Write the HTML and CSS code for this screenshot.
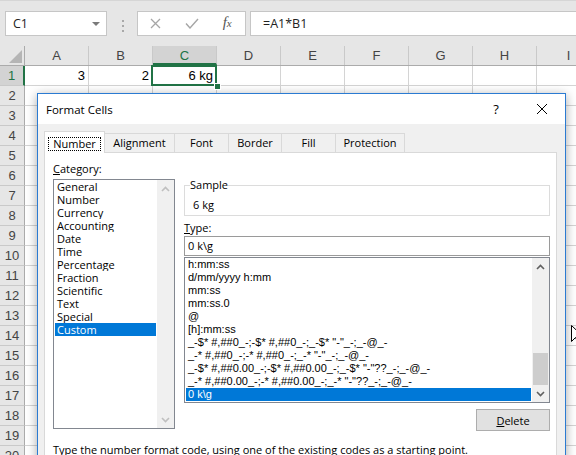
FILE: index.html
```html
<!DOCTYPE html>
<html lang="en">
<head>
    <meta charset="UTF-8">
    <title>Format Cells</title>
    <link rel="stylesheet" href="styles.css">
</head>
<body>
    <div class="formula-bar">
        <div class="name-box">
            <span>C1</span>
            <svg class="caret" width="8" height="4" viewBox="0 0 8 4"><path d="M0 0h8L4 4z" fill="#7a7a7a"/></svg>
        </div>
        <div class="grip"><i></i><i></i><i></i></div>
        <div class="fx-buttons">
            <span class="fx-slot">
                <svg width="11" height="11" viewBox="0 0 11 11"><path d="M1 1l9 9M10 1l-9 9" stroke="#a6a6a6" stroke-width="1.3" fill="none"/></svg>
            </span>
            <span class="fx-slot">
                <svg width="14" height="11" viewBox="0 0 14 11"><path d="M1 5.5l4 4.5L13 1" stroke="#a6a6a6" stroke-width="1.4" fill="none"/></svg>
            </span>
            <span class="fx-slot fx">f<small>x</small></span>
        </div>
        <div class="formula-input">=A1*B1</div>
    </div>

    <div class="col-heads">
        <div class="corner">
            <svg width="13" height="13" viewBox="0 0 13 13"><path d="M13 0v13H0z" fill="#b5b5b5"/></svg>
        </div>
        <div class="col-head">A</div>
        <div class="col-head">B</div>
        <div class="col-head active">C</div>
        <div class="col-head">D</div>
        <div class="col-head">E</div>
        <div class="col-head">F</div>
        <div class="col-head">G</div>
        <div class="col-head">H</div>
        <div class="col-head">I</div>
    </div>

    <div class="row">
        <div class="row-head active">1</div>
        <div class="cell">3</div>
        <div class="cell">2</div>
        <div class="cell selected">6 kg<span class="fill-handle"></span></div>
        <div class="cell"></div>
        <div class="cell"></div>
        <div class="cell"></div>
        <div class="cell"></div>
        <div class="cell"></div>
        <div class="cell"></div>
    </div>

    <div class="sheet-body">
        <div class="row-heads">
            <div class="row-head">2</div>
            <div class="row-head">3</div>
            <div class="row-head">4</div>
            <div class="row-head">5</div>
            <div class="row-head">6</div>
            <div class="row-head">7</div>
            <div class="row-head">8</div>
            <div class="row-head">9</div>
            <div class="row-head">10</div>
            <div class="row-head">11</div>
            <div class="row-head">12</div>
            <div class="row-head">13</div>
            <div class="row-head">14</div>
            <div class="row-head">15</div>
            <div class="row-head">16</div>
            <div class="row-head">17</div>
            <div class="row-head">18</div>
            <div class="row-head">19</div>
            <div class="row-head">20</div>
        </div>
        <div class="grid"></div>
    </div>

    <div class="dialog">
        <div class="titlebar">
            <span class="title">Format Cells</span>
            <span class="title-btn help">?</span>
            <span class="title-btn">
                <svg width="10" height="10" viewBox="0 0 10 10"><path d="M0 0l10 10M10 0L0 10" stroke="#000" stroke-width="1" fill="none"/></svg>
            </span>
        </div>

        <div class="tabs">
            <div class="tab active"><span class="focus">Number</span></div>
            <div class="tab tab-alignment">Alignment</div>
            <div class="tab tab-font">Font</div>
            <div class="tab tab-border">Border</div>
            <div class="tab tab-fill">Fill</div>
            <div class="tab tab-protection">Protection</div>
        </div>

        <div class="panel">
            <div class="panel-cols">
                <div class="category">
                    <div class="label"><u>C</u>ategory:</div>
                    <div class="listbox cat-list">
                        <ul class="items">
                            <li>General</li>
                            <li>Number</li>
                            <li>Currency</li>
                            <li>Accounting</li>
                            <li>Date</li>
                            <li>Time</li>
                            <li>Percentage</li>
                            <li>Fraction</li>
                            <li>Scientific</li>
                            <li>Text</li>
                            <li>Special</li>
                            <li class="selected">Custom</li>
                        </ul>
                        <div class="vscroll disabled">
                            <span class="arrow"><svg width="9" height="6" viewBox="0 0 9 6"><path d="M1 5l3.5-3.5L8 5" stroke="currentColor" stroke-width="1.6" fill="none"/></svg></span>
                            <span class="track"></span>
                            <span class="arrow"><svg width="9" height="6" viewBox="0 0 9 6"><path d="M1 1l3.5 3.5L8 1" stroke="currentColor" stroke-width="1.6" fill="none"/></svg></span>
                        </div>
                    </div>
                </div>

                <div class="format">
                    <fieldset class="sample">
                        <legend>Sample</legend>
                        <div class="sample-text">6 kg</div>
                    </fieldset>
                    <div class="label type-label"><u>T</u>ype:</div>
                    <div class="type-input">0 k\g</div>
                    <div class="listbox fmt-list">
                        <ul class="items">
                            <li>h:mm:ss</li>
                            <li>d/mm/yyyy h:mm</li>
                            <li>mm:ss</li>
                            <li>mm:ss.0</li>
                            <li>@</li>
                            <li>[h]:mm:ss</li>
                            <li>_-$* #,##0_-;-$* #,##0_-;_-$* "-"_-;_-@_-</li>
                            <li>_-* #,##0_-;-* #,##0_-;_-* "-"_-;_-@_-</li>
                            <li>_-$* #,##0.00_-;-$* #,##0.00_-;_-$* "-"??_-;_-@_-</li>
                            <li>_-* #,##0.00_-;-* #,##0.00_-;_-* "-"??_-;_-@_-</li>
                            <li class="selected">0 k\g</li>
                        </ul>
                        <div class="vscroll">
                            <span class="arrow"><svg width="9" height="6" viewBox="0 0 9 6"><path d="M1 5l3.5-3.5L8 5" stroke="currentColor" stroke-width="1.6" fill="none"/></svg></span>
                            <span class="track"><span class="thumb"></span></span>
                            <span class="arrow"><svg width="9" height="6" viewBox="0 0 9 6"><path d="M1 1l3.5 3.5L8 1" stroke="currentColor" stroke-width="1.6" fill="none"/></svg></span>
                        </div>
                    </div>
                    <div class="actions">
                        <button class="btn"><u>D</u>elete</button>
                    </div>
                </div>
            </div>
            <p class="hint">Type the number format code, using one of the existing codes as a starting point.</p>
        </div>
    </div>

    <svg class="cursor" width="12" height="20" viewBox="0 0 12 20">
        <path d="M0.5 0.5v16l4-4 3 6.5 2.2-1-3-6.3h5.6z" fill="#fff" stroke="#000" stroke-width="1"/>
    </svg>
</body>
</html>
```

FILE: styles.css
```css
* {
    margin: 0;
    padding: 0;
    box-sizing: border-box;
}

body {
    position: relative;
    width: 576px;
    height: 455px;
    overflow: hidden;
    background: #fff;
    font-family: "Open Sans", sans-serif;
    color: #000;
}

/* ---------- formula bar ---------- */

.formula-bar {
    display: flex;
    align-items: flex-start;
    height: 46px;
    padding: 11px 0 0 5px;
    background: #e6e6e6;
    border-top: 1px solid #d6d6d6;
}

.name-box {
    display: flex;
    align-items: center;
    justify-content: space-between;
    width: 102px;
    height: 25px;
    margin-top: -1px;
    padding: 0 6px 0 7px;
    background: #fff;
    border: 1px solid #c6c6c6;
    font-size: 12.5px;
    color: #222;
}

.grip {
    display: flex;
    flex-direction: column;
    gap: 3px;
    margin: 8px 0 0 15px;
}

.grip i {
    display: block;
    width: 2px;
    height: 2px;
    background: #a8a8a8;
}

.fx-buttons {
    display: flex;
    width: 109px;
    height: 25px;
    margin: -1px 0 0 13px;
    background: #fff;
    border: 1px solid #c6c6c6;
}

.fx-slot {
    flex: 1;
    display: flex;
    align-items: center;
    justify-content: center;
}

.fx {
    font-family: "Liberation Serif", serif;
    font-style: italic;
    font-size: 15px;
    color: #555;
    padding-bottom: 2px;
}

.fx small {
    font-size: 11px;
}

.formula-input {
    flex: 1;
    height: 25px;
    margin: -1px 0 0 4px;
    padding-left: 12px;
    background: #fff;
    border: 1px solid #c6c6c6;
    border-right: 0;
    font-size: 12.5px;
    line-height: 23px;
    color: #222;
}

/* ---------- sheet ---------- */

.col-heads,
.row {
    display: flex;
    height: 20px;
    font-family: "Liberation Sans", sans-serif;
    font-size: 13px;
    color: #444;
}

.col-heads {
    background: #e6e6e6;
    border-bottom: 1px solid #ababab;
}

.corner {
    display: flex;
    align-items: flex-end;
    justify-content: flex-end;
    flex: 0 0 25px;
    padding: 0 2px 2px 0;
    border-right: 1px solid #ababab;
}

.col-head {
    flex: 0 0 64px;
    border-right: 1px solid #c9c9c9;
    text-align: center;
    line-height: 19px;
}

.col-head.active {
    background: #d3d3d3;
    color: #217346;
    border-bottom: 2px solid #217346;
}

.row-head {
    flex: none;
    width: 25px;
    height: 20px;
    background: #e6e6e6;
    border-right: 1px solid #ababab;
    border-bottom: 1px solid #c9c9c9;
    text-align: center;
    line-height: 19px;
    font-family: "Liberation Sans", sans-serif;
    font-size: 13px;
    color: #444;
}

.row-head.active {
    background: #d3d3d3;
    color: #217346;
    border-right: 2px solid #217346;
}

.cell {
    position: relative;
    flex: 0 0 64px;
    padding-right: 3px;
    border-right: 1px solid #d4d4d4;
    border-bottom: 1px solid #d4d4d4;
    text-align: right;
    line-height: 20px;
    color: #000;
}

.cell.selected::after {
    content: "";
    position: absolute;
    top: -1px;
    left: -2px;
    right: -1px;
    bottom: -1px;
    border: 2px solid #217346;
}

.fill-handle {
    position: absolute;
    right: -5px;
    bottom: -5px;
    z-index: 1;
    width: 7px;
    height: 7px;
    background: #217346;
    border: 1px solid #fff;
}

.sheet-body {
    display: flex;
}

.grid {
    flex: 1;
    height: 380px;
    background-image:
        linear-gradient(to right, transparent 63px, #d4d4d4 63px),
        linear-gradient(to bottom, transparent 19px, #d4d4d4 19px);
    background-size: 64px 20px;
}

/* ---------- dialog ---------- */

.dialog {
    position: absolute;
    left: 37px;
    top: 93px;
    width: 529px;
    height: 390px;
    background: #f0f0f0;
    border: 1px solid #2b7bd2;
    box-shadow: 0 2px 10px rgba(0, 0, 0, 0.35);
    font-size: 11px;
}

.titlebar {
    display: flex;
    align-items: center;
    height: 30px;
    background: #fff;
}

.title {
    flex: 1;
    padding-left: 8px;
    font-size: 11.5px;
}

.title-btn {
    display: flex;
    align-items: center;
    justify-content: center;
    width: 46px;
    height: 30px;
}

.help {
    font-size: 13px;
}

.tabs {
    display: flex;
    align-items: flex-end;
    margin: 7px 0 0 6px;
}

.tab {
    height: 19px;
    margin-left: -1px;
    border: 1px solid #d9d9d9;
    border-bottom: 0;
    text-align: center;
    line-height: 18px;
}

.tab.active {
    position: relative;
    z-index: 1;
    width: 61px;
    height: 22px;
    margin: 0 0 -1px;
    padding: 5px 3px 0;
    background: #fff;
}

.focus {
    display: block;
    height: 14px;
    border: 1px dotted #000;
    line-height: 12px;
}

.tab-alignment { width: 71px; }
.tab-font { width: 55px; }
.tab-border { width: 54px; }
.tab-fill { width: 55px; }
.tab-protection { width: 70px; }

.panel {
    width: 513px;
    height: 320px;
    margin-left: 6px;
    padding: 8px 6px 0 8px;
    background: #fff;
    border: 1px solid #d9d9d9;
}

.panel-cols {
    display: flex;
    gap: 9px;
}

.category {
    width: 122px;
}

.label {
    height: 16px;
    line-height: 16px;
}

.category .label {
    margin-bottom: 2px;
}

.listbox {
    display: flex;
    background: #fff;
    border: 1px solid #828790;
}

.cat-list {
    height: 250px;
}

.items {
    flex: 1;
    min-width: 0;
    padding: 0 1px;
    list-style: none;
}

.items li {
    height: 13px;
    padding-left: 2px;
    line-height: 13px;
    white-space: nowrap;
    overflow: hidden;
}

.items li.selected {
    background: #0078d7;
    color: #fff;
}

.vscroll {
    display: flex;
    flex-direction: column;
    flex: 0 0 17px;
    background: #f0f0f0;
    color: #606060;
}

.vscroll.disabled {
    color: #bfbfbf;
}

.arrow {
    display: flex;
    align-items: center;
    justify-content: center;
    height: 17px;
}

.track {
    flex: 1;
    display: flex;
    flex-direction: column;
    justify-content: flex-end;
}

.thumb {
    height: 32px;
    margin: 0 1px;
    background: #cdcdcd;
}

.format {
    width: 366px;
}

.sample {
    margin-top: 16px;
    padding: 0 5px 2px;
    border: 1px solid #dcdcdc;
}

.sample legend {
    padding: 0;
    line-height: 16px;
}

.sample-text {
    margin: 4px 0 0 3px;
    line-height: 16px;
}

.type-label {
    margin-top: 4px;
}

.type-input {
    height: 20px;
    padding-left: 3px;
    border: 1px solid #9a9a9a;
    line-height: 18px;
}

.fmt-list {
    height: 146px;
    margin-top: 1px;
}

.fmt-list .items {
    font-family: "Liberation Sans", sans-serif;
    font-size: 11px;
}

.actions {
    display: flex;
    justify-content: flex-end;
    margin-top: 6px;
}

.btn {
    width: 74px;
    height: 22px;
    background: #e1e1e1;
    border: 1px solid #adadad;
    font-family: "Open Sans", sans-serif;
    font-size: 11px;
    color: #000;
}

.hint {
    margin-top: 11px;
    line-height: 16px;
    white-space: nowrap;
}

.cursor {
    position: absolute;
    left: 571px;
    top: 325px;
}
```
